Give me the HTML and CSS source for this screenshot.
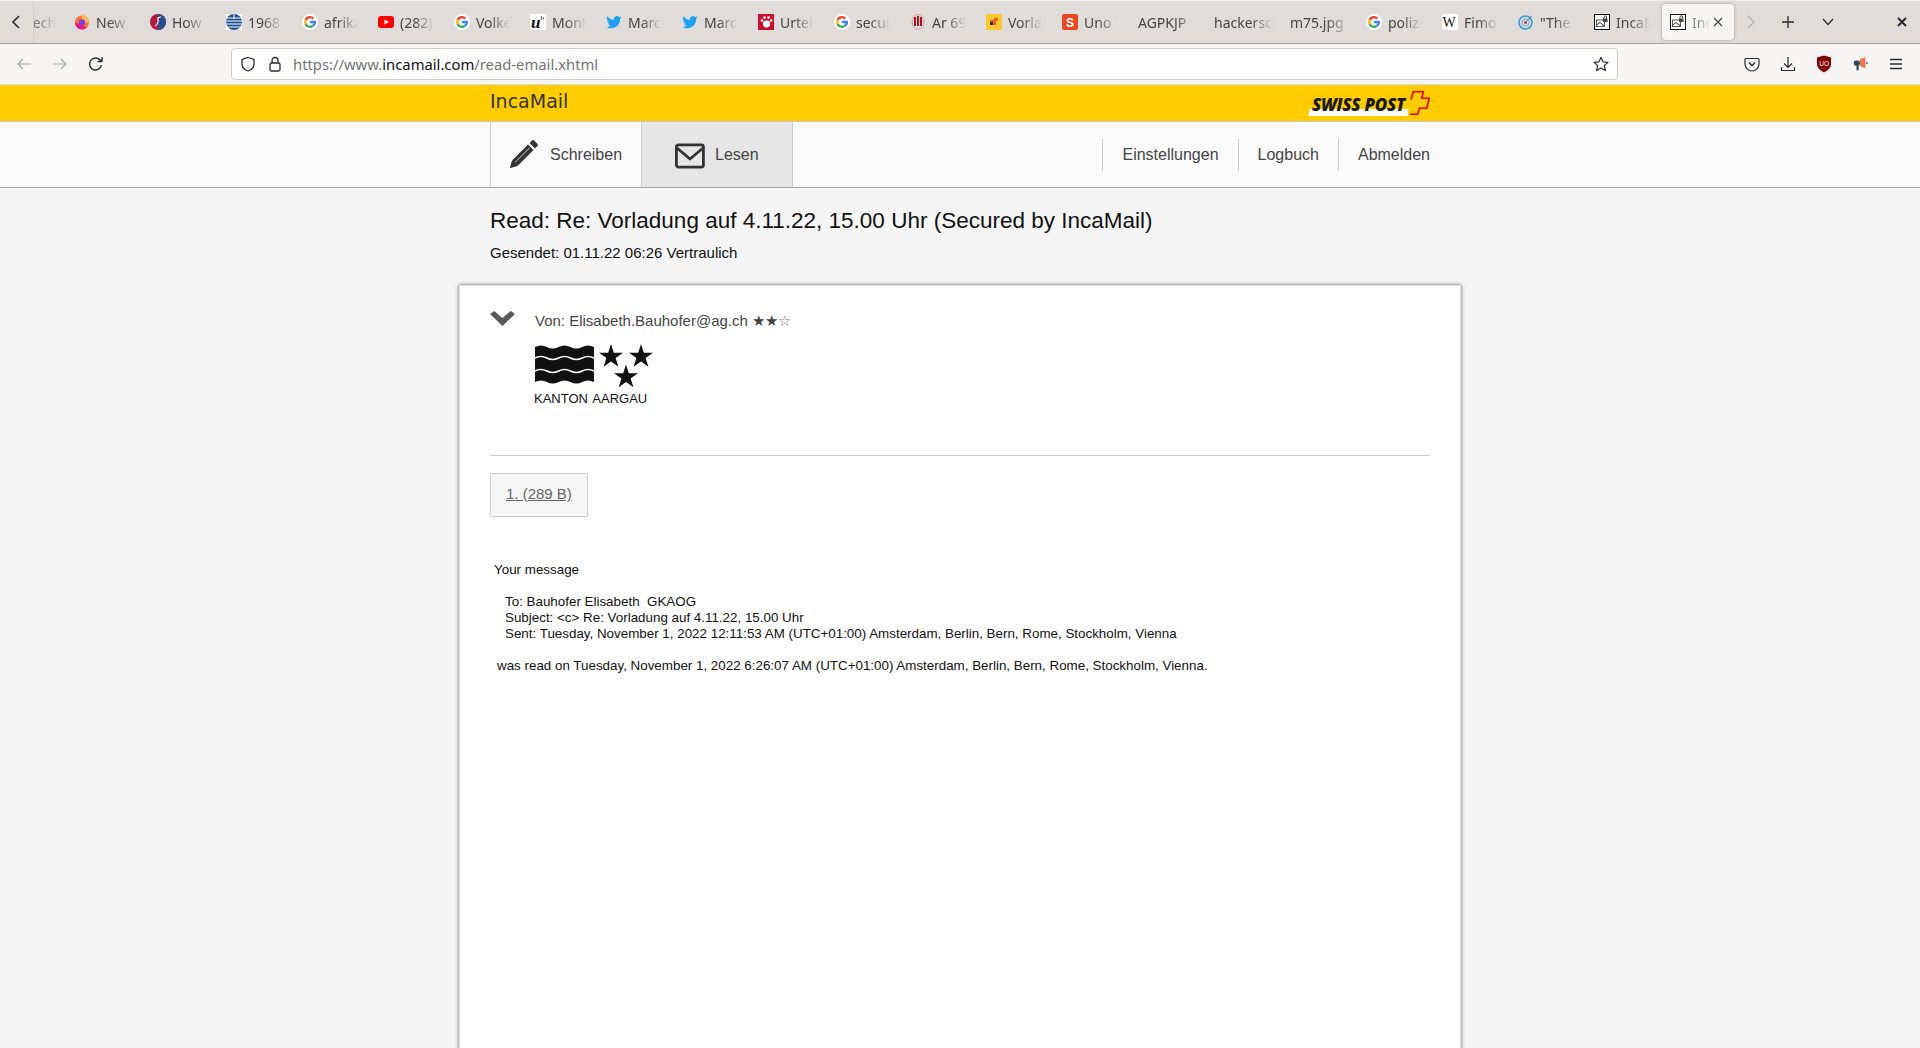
FILE: index.html
```html
<!DOCTYPE html>
<html>
<head>
  <meta charset="UTF-8">
  <title>IncaMail</title>
  <link rel="stylesheet" href="styles.css">
</head>
<body>
  <div class="tabstrip">
    <svg class="scroll-left" width="10" height="16" viewBox="0 0 10 16"><path d="M8 2 L2 8 L8 14" fill="none" stroke="#2b2a33" stroke-width="1.6"/></svg>
    <div class="tabs">
      <div class="tab first"><span class="tab-text cut">Tech</span></div>
      <div class="tab"><svg class="fav" viewBox="0 0 16 16"><circle cx="8" cy="8.5" r="7" fill="#ff7139"/><path d="M8 1.500 L11 0 L12 3 a7 7 0 0 1 3 5.500h-4a3 3 0 0 0-3-3z" fill="#ffbd4f"/><circle cx="8" cy="8.5" r="3.2" fill="#7542e5"/><path d="M1 8.5a7 7 0 0 0 7 7 7 7 0 0 0 5-2z" fill="#e31587"/></svg><span class="tab-text">New Tab</span></div>
      <div class="tab"><svg class="fav" viewBox="0 0 16 16"><circle cx="8" cy="8" r="8" fill="#b5173f"/><path d="M8 0a8 8 0 0 1 0 16z" fill="#27508f"/><path d="M5 12 Q9 9 8 6 T11 3" fill="none" stroke="#fff" stroke-width="1.200"/></svg><span class="tab-text">How to</span></div>
      <div class="tab"><svg class="fav" viewBox="0 0 16 16"><rect width="16" height="16" fill="#fff"/><circle cx="8" cy="8" r="8" fill="#1d4f91"/><path d="M0 4h16M0 7h16M0 10h16M0 13h16M8 0v5" stroke="#fff" stroke-width="1"/></svg><span class="tab-text">1968 in</span></div>
      <div class="tab"><svg class="fav" viewBox="0 0 16 16"><use href="#g-logo"/></svg><span class="tab-text">afrikan</span></div>
      <div class="tab"><svg class="fav" viewBox="0 0 16 16"><rect y="2" width="16" height="12" rx="3" fill="#f00"/><path d="M6.5 5.5 L11 8 L6.5 10.5z" fill="#fff"/></svg><span class="tab-text">(282) Y</span></div>
      <div class="tab"><svg class="fav" viewBox="0 0 16 16"><use href="#g-logo"/></svg><span class="tab-text">Volkel</span></div>
      <div class="tab"><svg class="fav" viewBox="0 0 16 16"><rect width="16" height="16" fill="#fff"/><text x="1" y="14" class="uni-u">u</text><text x="10.5" y="6" class="uni-b">b</text></svg><span class="tab-text">Monta</span></div>
      <div class="tab"><svg class="fav" viewBox="0 0 16 16"><use href="#tw-logo"/></svg><span class="tab-text">Marco</span></div>
      <div class="tab"><svg class="fav" viewBox="0 0 16 16"><use href="#tw-logo"/></svg><span class="tab-text">Marco</span></div>
      <div class="tab"><svg class="fav" viewBox="0 0 16 16"><rect width="16" height="16" fill="#c8102e"/><ellipse cx="8.5" cy="10" rx="3.6" ry="3.4" fill="#fff"/><circle cx="4" cy="6.5" r="1.3" fill="#fff"/><circle cx="6.5" cy="3.5" r="1.3" fill="#fff"/><circle cx="10.5" cy="3.5" r="1.3" fill="#fff"/><circle cx="13" cy="6.5" r="1.3" fill="#fff"/></svg><span class="tab-text">Urteil</span></div>
      <div class="tab"><svg class="fav" viewBox="0 0 16 16"><use href="#g-logo"/></svg><span class="tab-text">secure</span></div>
      <div class="tab"><svg class="fav" viewBox="0 0 16 16"><ellipse cx="8" cy="8" rx="6" ry="7.5" fill="none" stroke="#d9a0a0"/><path d="M5 3v9M8 2v10M11 3v9" stroke="#b01020" stroke-width="2"/></svg><span class="tab-text">Ar 69</span></div>
      <div class="tab"><svg class="fav" viewBox="0 0 16 16"><rect width="16" height="16" fill="#fdc82f"/><path d="M8 4h4v3h-2v4H6V8H4V6h4z" fill="#e8632a"/><rect x="4" y="8" width="3" height="3" fill="#333"/></svg><span class="tab-text">Vorlad</span></div>
      <div class="tab"><svg class="fav" viewBox="0 0 16 16"><rect width="16" height="16" rx="2" fill="#e9491f"/><text x="4" y="13" class="sub-s">S</text></svg><span class="tab-text">Uno T</span></div>
      <div class="tab"><span class="tab-text plain">AGPKJP</span></div>
      <div class="tab"><span class="tab-text plain">hackerscene</span></div>
      <div class="tab"><span class="tab-text plain">m75.jpg</span></div>
      <div class="tab"><svg class="fav" viewBox="0 0 16 16"><use href="#g-logo"/></svg><span class="tab-text">polize</span></div>
      <div class="tab"><svg class="fav" viewBox="0 0 16 16"><rect width="16" height="16" rx="2" fill="#fff"/><text x="0.500" y="12.500" class="wiki-w">W</text></svg><span class="tab-text">Fimo</span></div>
      <div class="tab"><svg class="fav" viewBox="0 0 16 16"><circle cx="7.5" cy="8.5" r="6.5" fill="none" stroke="#3d9bd4" stroke-width="1.6"/><circle cx="7.5" cy="8.5" r="3.4" fill="none" stroke="#7dbde2" stroke-width="1.4"/><circle cx="7.5" cy="8.5" r="1.5" fill="#d8393f"/><path d="M8 8 L14 2" stroke="#3d7fa8"/></svg><span class="tab-text">"The T</span></div>
      <div class="tab"><svg class="fav" viewBox="0 0 16 16"><use href="#inca-logo"/></svg><span class="tab-text">IncaMa</span></div>
      <div class="tab active"><svg class="fav" viewBox="0 0 16 16"><use href="#inca-logo"/></svg><span class="tab-text short">Inca</span><svg class="tab-close" width="10" height="10" viewBox="0 0 10 10"><path d="M1 1 L9 9 M9 1 L1 9" stroke="#444" stroke-width="1.1"/></svg></div>
    </div>
    <svg class="scroll-right" width="10" height="16" viewBox="0 0 10 16"><path d="M2 2 L8 8 L2 14" fill="none" stroke="#b5b3b0" stroke-width="1.4"/></svg>
    <svg class="newtab" width="12" height="12" viewBox="0 0 12 12"><path d="M6 0v12M0 6h12" stroke="#2b2a33" stroke-width="1.3"/></svg>
    <svg class="alltabs" width="12" height="8" viewBox="0 0 12 8"><path d="M1 1 L6 6.5 L11 1" fill="none" stroke="#2b2a33" stroke-width="1.2"/></svg>
    <svg class="winclose" width="10" height="10" viewBox="0 0 10 10"><path d="M1 1 L9 9 M9 1 L1 9" stroke="#2b2a33" stroke-width="2"/></svg>
  </div>

  <div class="toolbar">
    <div class="nav-buttons">
      <svg width="16" height="16" viewBox="0 0 16 16"><path d="M15 8H2M7 3 L2 8 L7 13" fill="none" stroke="#a9a8a6" stroke-width="1.2"/></svg>
      <svg width="16" height="16" viewBox="0 0 16 16"><path d="M1 8h13M9 3 L14 8 L9 13" fill="none" stroke="#a9a8a6" stroke-width="1.2"/></svg>
      <svg width="16" height="16" viewBox="0 0 16 16"><path d="M13.5 9a6 6 0 1 1-1.6-5.2L14 5.5M14 1v4.500h-4.500" fill="none" stroke="#2b2a33" stroke-width="1.4"/></svg>
    </div>
    <div class="urlbar">
      <svg class="url-icon" width="16" height="16" viewBox="0 0 16 16"><path d="M8 1.500 L14 3.500 V8 C14 11.500 11 14 8 15 C5 14 2 11.500 2 8 V3.500z" fill="none" stroke="#2b2a33" stroke-width="1.300"/></svg>
      <svg class="url-icon lock" width="16" height="16" viewBox="0 0 16 16"><rect x="3" y="7" width="10" height="8" rx="1.500" fill="none" stroke="#2b2a33" stroke-width="1.300"/><path d="M5 7V4.500a3 3 0 0 1 6 0V7" fill="none" stroke="#2b2a33" stroke-width="1.300"/></svg>
      <span class="url-text">https://www.<b>incamail.com</b>/read-email.xhtml</span>
      <svg class="url-star" width="16" height="16" viewBox="0 0 16 16"><path d="M8 1.300 L10 5.800 L15 6.300 L11.300 9.600 L12.400 14.600 L8 12 L3.600 14.600 L4.700 9.600 L1 6.300 L6 5.800z" fill="none" stroke="#2b2a33" stroke-width="1.200" stroke-linejoin="round"/></svg>
    </div>
    <div class="tool-icons">
      <svg width="16" height="16" viewBox="0 0 16 16"><path d="M2 2.500h12a1 1 0 0 1 1 1V8a7 7 0 0 1-14 0V3.500a1 1 0 0 1 1-1z" fill="none" stroke="#2b2a33" stroke-width="1.200"/><path d="M5 6.500 L8 9.500 L11 6.500" fill="none" stroke="#2b2a33" stroke-width="1.400"/></svg>
      <svg width="16" height="16" viewBox="0 0 16 16"><path d="M8 1v10M4 7.500 L8 11.500 L12 7.500M1.500 11v3.500h13V11" fill="none" stroke="#2b2a33" stroke-width="1.200"/></svg>
      <svg width="16" height="18" viewBox="0 0 16 18"><path d="M8 0.500 L15 2.500 V9 C15 13 11 16 8 17.500 C5 16 1 13 1 9 V2.500z" fill="#800000"/><text x="3.300" y="11" class="ublock">UO</text></svg>
      <svg width="16" height="16" viewBox="0 0 18 18"><path d="M9 4 L15 1 V14 L9 11z" fill="#f7744a"/><rect x="2" y="5" width="7" height="6" rx="2.500" fill="#2e4a5e"/><rect x="5" y="10" width="2.500" height="6" fill="#2e4a5e"/><rect x="16" y="7" width="1.500" height="2" fill="#2e4a5e"/></svg>
      <svg width="16" height="16" viewBox="0 0 16 16"><path d="M2 3.500h12M2 8h12M2 12.500h12" stroke="#2b2a33" stroke-width="1.300"/></svg>
    </div>
  </div>

  <header class="brand-bar">
    <div class="wrap brand-row">
      <span class="brand-name">IncaMail</span>
      <div class="post-logo">
        <span class="post-white"></span>
        <span class="post-text">SWISS POST</span>
        <svg class="post-cross" width="21" height="26" viewBox="0 0 21 26"><path d="M2 9.500 L4.300 1.700 H14.300 L12.700 8.300 H20.300 L17.700 18.300 H10.300 L8.700 24.300 H1" fill="none" stroke="#e3000b" stroke-width="1.600"/></svg>
      </div>
    </div>
  </header>

  <nav class="nav-bar">
    <div class="wrap nav-row">
      <div class="nav-tabs">
        <a class="nav-tab">
          <svg width="32" height="32" viewBox="0 0 32 32"><path d="M3 29 L5.500 21 L21 5.500 L26.500 11 L11 26.500z" fill="#333"/><path d="M8 23.500 L22.500 9" stroke="#fbfbfb" stroke-width="0.800"/><path d="M3 29 L5 22 L10 27z" fill="#333"/><path d="M22.500 4 L25 1.500 a1.500 1.500 0 0 1 2 0 L30.500 5 a1.500 1.500 0 0 1 0 2 L28 9.500z" fill="#333"/></svg>
          Schreiben
        </a>
        <a class="nav-tab selected">
          <svg width="32" height="28" viewBox="0 0 32 28"><rect x="2.400" y="3.900" width="27" height="22.200" rx="2" fill="none" stroke="#333" stroke-width="2.800"/><path d="M3 7 L16 18 L29 7" fill="none" stroke="#333" stroke-width="2.800"/></svg>
          Lesen
        </a>
      </div>
      <div class="nav-links">
        <a>Einstellungen</a>
        <a>Logbuch</a>
        <a>Abmelden</a>
      </div>
    </div>
  </nav>

  <main>
    <div class="wrap mail-head">
      <h1>Read: Re: Vorladung auf 4.11.22, 15.00 Uhr (Secured by IncaMail)</h1>
      <p>Gesendet: 01.11.22 06:26 Vertraulich</p>
    </div>
    <section class="card">
      <div class="sender">
        <svg class="chev" width="25" height="16" viewBox="0 0 25 16"><path d="M0 3 L4.300 0 L12.500 7 L20.700 0 L25 3 L12.500 15z" fill="#595959"/></svg>
        <div class="sender-info">
          <div class="sender-line">Von: Elisabeth.Bauhofer@ag.ch ★★<span class="star-empty">☆</span></div>
          <svg class="aargau" width="118" height="44" viewBox="0 0 118 44">
            <path d="M0 3 q5.900 -3 11.800 0 t11.800 0 t11.800 0 t11.800 0 t11.800 0 V38 q-5.900 -3 -11.800 0 t-11.800 0 t-11.800 0 t-11.800 0 t-11.800 0z" fill="#111"/>
            <path d="M0 14 q5.900 -3 11.800 0 t11.800 0 t11.800 0 t11.800 0 t11.800 0" fill="none" stroke="#fff" stroke-width="1.500"/>
            <path d="M0 27 q5.900 -3 11.800 0 t11.800 0 t11.800 0 t11.800 0 t11.800 0" fill="none" stroke="#fff" stroke-width="1.500"/>
            <path transform="translate(76 0)" d="M0 0 L2.800 8.700 L12 8.700 L4.600 14.100 L7.400 22.800 L0 17.400 L-7.400 22.800 L-4.600 14.100 L-12 8.700 L-2.800 8.700z" fill="#111"/>
            <path transform="translate(106 0)" d="M0 0 L2.800 8.700 L12 8.700 L4.600 14.100 L7.400 22.800 L0 17.400 L-7.400 22.800 L-4.600 14.100 L-12 8.700 L-2.800 8.700z" fill="#111"/>
            <path transform="translate(91 20.500)" d="M0 0 L2.800 8.700 L12 8.700 L4.600 14.100 L7.400 22.800 L0 17.400 L-7.400 22.800 L-4.600 14.100 L-12 8.700 L-2.800 8.700z" fill="#111"/>
          </svg>
          <div class="aargau-text">KANTON AARGAU</div>
        </div>
      </div>
      <hr class="rule">
      <a class="attachment">1. (289 B)</a>
      <div class="message">
        <p class="msg-top">Your message</p>
        <p class="msg-block">To: Bauhofer Elisabeth&nbsp; GKAOG<br>
        Subject: &lt;c&gt; Re: Vorladung auf 4.11.22, 15.00 Uhr<br>
        Sent: Tuesday, November 1, 2022 12:11:53 AM (UTC+01:00) Amsterdam, Berlin, Bern, Rome, Stockholm, Vienna</p>
        <p class="msg-end">was read on Tuesday, November 1, 2022 6:26:07 AM (UTC+01:00) Amsterdam, Berlin, Bern, Rome, Stockholm, Vienna.</p>
      </div>
    </section>
  </main>

  <svg width="0" height="0" class="defs">
    <defs>
      <symbol id="g-logo" viewBox="0 0 16 16">
        <circle cx="8" cy="8" r="8" fill="#fff"/>
        <g transform="translate(8 8) scale(1.250) translate(-8 -8)">
          <path d="M8 3.200a4.800 4.800 0 0 1 3.300 1.300l-1.400 1.400A2.800 2.800 0 0 0 5.300 7L3.700 5.800A4.800 4.800 0 0 1 8 3.200z" fill="#ea4335"/>
          <path d="M3.700 5.800 L5.300 7a2.900 2.900 0 0 0 0 2L3.700 10.200a4.800 4.800 0 0 1 0-4.400z" fill="#fbbc05"/>
          <path d="M5.300 9a2.800 2.800 0 0 0 4.300 1.400l1.500 1.200A4.800 4.800 0 0 1 3.700 10.200z" fill="#34a853"/>
          <path d="M12.800 7H8v2h2.700a2.400 2.400 0 0 1-1.100 1.400l1.500 1.200A4.800 4.800 0 0 0 12.800 7z" fill="#4285f4"/>
        </g>
      </symbol>
      <symbol id="tw-logo" viewBox="0 0 16 16">
        <path d="M15.500 3.500a6 6 0 0 1-1.800.5 3 3 0 0 0 1.400-1.700 6 6 0 0 1-2 .8 3.100 3.100 0 0 0-5.300 2.800A8.800 8.800 0 0 1 1.400 2.600a3.100 3.100 0 0 0 1 4.100 3 3 0 0 1-1.400-.4 3.100 3.100 0 0 0 2.500 3 3 3 0 0 1-1.400.1 3.100 3.100 0 0 0 2.900 2.100A6.200 6.200 0 0 1 .5 12.900a8.800 8.800 0 0 0 13.500-7.800 6 6 0 0 0 1.500-1.600z" fill="#1da1f2"/>
      </symbol>
      <symbol id="inca-logo" viewBox="0 0 16 16">
        <rect x="0.500" y="0.500" width="15" height="15" fill="#fff" stroke="#111"/>
        <rect x="2.500" y="6" width="8" height="6.500" fill="#fff" stroke="#333" stroke-width="0.800"/>
        <path d="M2.500 11 L6 8.500 L10.500 12" fill="none" stroke="#333"/>
        <rect x="9" y="4.500" width="4.500" height="3.500" fill="#444"/>
        <path d="M10 4.500V3a1.200 1.200 0 0 1 2.500 0v1.500" fill="none" stroke="#444"/>
      </symbol>
    </defs>
  </svg>
</body>
</html>
```

FILE: styles.css
```css
* {
  box-sizing: border-box;
}

html,
body {
  margin: 0;
  height: 100%;
}

body {
  overflow: hidden;
  background-color: #f5f5f5;
  font-family: "Liberation Sans", Arial, sans-serif;
  color: #333;
}

.defs {
  display: none;
}

/* browser chrome */
.tabstrip {
  display: flex;
  align-items: center;
  height: 44px;
  padding-left: 11px;
  background-color: #dfdcd9;
  border-top: 1px solid #f0efed;
  border-bottom: 1px solid #a8a6a4;
}

.scroll-left {
  flex: none;
  margin-right: 12px;
}

.tabs {
  display: flex;
  align-items: center;
  flex: none;
  width: 1705px;
}

.tab {
  display: flex;
  align-items: center;
  flex: none;
  width: 76px;
  height: 36px;
  padding-left: 8px;
  overflow: hidden;
}

.tab.first {
  width: 33px;
  height: 42px;
  padding-left: 0;
  border-left: 1px solid #d3d0cc;
}

.tab.active {
  position: relative;
  width: 72px;
  background-color: #f6f5f4;
  border-radius: 4px;
  box-shadow: 0 0 3px rgba(0, 0, 0, 0.3);
}

.fav {
  flex: none;
  width: 16px;
  height: 16px;
  margin-right: 6px;
}

.tab-text {
  flex: none;
  width: 34px;
  overflow: hidden;
  white-space: nowrap;
  font-family: "Noto Sans", sans-serif;
  font-size: 14px;
  color: #444;
  -webkit-mask-image: linear-gradient(to right, #000 40%, transparent 100%);
  mask-image: linear-gradient(to right, #000 40%, transparent 100%);
}

.tab-text.cut {
  width: 30px;
  margin-left: -8px;
  color: #777;
}

.tab-text.plain {
  width: 60px;
  -webkit-mask-image: linear-gradient(to right, #000 60%, transparent 100%);
  mask-image: linear-gradient(to right, #000 60%, transparent 100%);
}

.tab-text.short {
  width: 18px;
  color: #8a8a8a;
}

.tab-close {
  position: absolute;
  right: 11px;
  top: 13px;
}

.uni-u {
  font-family: "Liberation Serif", serif;
  font-style: italic;
  font-weight: bold;
  font-size: 17px;
  fill: #111;
}

.uni-b {
  font-family: "Liberation Serif", serif;
  font-size: 7px;
  fill: #111;
}

.sub-s {
  font-family: "Liberation Sans", sans-serif;
  font-weight: bold;
  font-size: 12px;
  fill: #fff;
}

.wiki-w {
  font-family: "Liberation Serif", serif;
  font-size: 14px;
  fill: #111;
}

.ublock {
  font-family: "Liberation Sans", sans-serif;
  font-size: 6.500px;
  fill: #fff;
}

.scroll-right {
  flex: none;
  margin-left: 8px;
}

.newtab {
  flex: none;
  margin-left: 26px;
}

.alltabs {
  flex: none;
  margin-left: 28px;
}

.winclose {
  flex: none;
  margin-left: 63px;
}

.toolbar {
  display: flex;
  align-items: center;
  height: 41px;
  background-color: #f6f5f4;
  border-bottom: 1px solid #dcdad7;
}

.nav-buttons {
  display: flex;
  align-items: center;
  gap: 20px;
  flex: none;
  width: 231px;
  padding-left: 16px;
}

.urlbar {
  display: flex;
  align-items: center;
  flex: none;
  width: 1387px;
  height: 32px;
  padding: 0 8px;
  background-color: #fff;
  border: 1px solid #cfcdc9;
  border-radius: 4px;
}

.url-icon {
  margin-right: 11px;
}

.url-icon.lock {
  margin-right: 10px;
}

.url-text {
  font-family: "Noto Sans", sans-serif;
  font-size: 14.800px;
  color: #737373;
}

.url-text b {
  font-weight: normal;
  color: #111;
}

.url-star {
  margin-left: auto;
}

.tool-icons {
  display: flex;
  align-items: center;
  gap: 20px;
  margin-left: 126px;
}

/* page */
.wrap {
  width: 940px;
  margin: 0 auto;
}

.brand-bar {
  height: 37px;
  background-color: #fc0;
  border-bottom: 1px solid #c8c8c8;
}

.brand-row {
  display: flex;
  align-items: center;
  justify-content: space-between;
  height: 36px;
}

.brand-name {
  margin-top: -4px;
  font-family: "DejaVu Sans", sans-serif;
  font-size: 19px;
  color: #333;
}

.post-logo {
  position: relative;
  display: flex;
  align-items: center;
  width: 121px;
  height: 26px;
  padding-top: 3px;
}

.post-white {
  position: absolute;
  left: 0;
  bottom: 0;
  width: 99px;
  height: 7px;
  background-color: #fff;
  transform: skewX(-10deg);
}

.post-text {
  position: relative;
  margin-left: 3px;
  font-family: "Open Sans", sans-serif;
  font-weight: 800;
  font-style: italic;
  font-size: 17px;
  letter-spacing: -0.300px;
  white-space: nowrap;
  color: #1a1a1a;
}

.post-cross {
  position: absolute;
  right: 0;
  top: 0;
}

.nav-bar {
  height: 66px;
  background-color: #fbfbfb;
  border-bottom: 1px solid #a6a6a6;
}

.nav-row {
  display: flex;
  justify-content: space-between;
  height: 65px;
}

.nav-tabs {
  display: flex;
}

.nav-tab {
  display: flex;
  align-items: center;
  gap: 11px;
  width: 151px;
  height: 65px;
  padding-left: 16px;
  border-left: 1px solid #ccc;
  font-size: 16px;
  color: #444;
}

.nav-tab.selected {
  gap: 9px;
  width: 152px;
  padding-left: 32px;
  background-color: #e6e6e6;
  border-right: 1px solid #ccc;
}

.nav-links {
  display: flex;
  align-items: center;
}

.nav-links a {
  display: flex;
  align-items: center;
  height: 32px;
  padding: 0 19px 0 19px;
  border-left: 1px solid #ccc;
  font-size: 16px;
  color: #444;
}

.nav-links a:last-child {
  padding-right: 0;
}

.mail-head h1 {
  margin: 0;
  padding-top: 20px;
  font-size: 22.500px;
  line-height: 26px;
  font-weight: normal;
  color: #111;
}

.mail-head p {
  margin: 10px 0 0;
  font-size: 15px;
  line-height: 18px;
  color: #111;
}

.card {
  width: 1002px;
  height: 800px;
  margin: 23px auto 0;
  padding: 25px 30px;
  background-color: #fff;
  border: 1px solid #ddd;
  box-shadow: 0 0 4px rgba(0, 0, 0, 0.6);
}

.sender {
  display: flex;
}

.chev {
  flex: none;
  margin-right: 20px;
}

.sender-line {
  margin-top: 1px;
  font-size: 15px;
  line-height: 18px;
  color: #444;
}

.star-empty {
  color: #777;
}

.aargau {
  display: block;
  margin-top: 14px;
}

.aargau-text {
  margin-top: 3px;
  margin-left: -1px;
  font-size: 13px;
  line-height: 15px;
  word-spacing: 1.500px;
  color: #111;
}

.rule {
  margin: 49px 0 0;
  border: 0;
  border-top: 1px solid #ccc;
}

.attachment {
  display: block;
  width: fit-content;
  height: 44px;
  margin-top: 17px;
  padding: 11px 15px;
  background-color: #f6f6f6;
  border: 1px solid #ccc;
  border-radius: 2px;
  font-size: 15px;
  line-height: 18px;
  color: #666;
  text-decoration: underline;
}

.message {
  margin-top: 45px;
  font-size: 13.380px;
  line-height: 16px;
  color: #111;
}

.message p {
  margin: 0;
}

.message .msg-top {
  padding-left: 4px;
}

.message .msg-block {
  margin-top: 16px;
  padding-left: 15px;
}

.message .msg-end {
  margin-top: 16px;
  padding-left: 7px;
}
```
